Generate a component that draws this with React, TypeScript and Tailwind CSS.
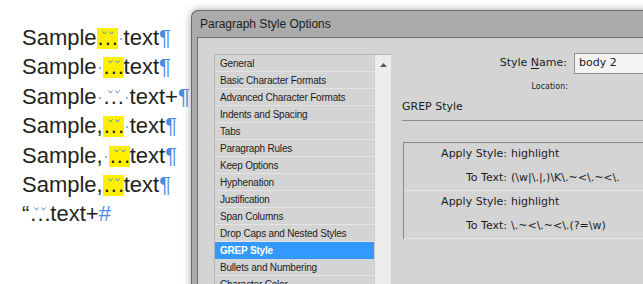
import React from "react";

const LIST_ITEMS = [
  "General",
  "Basic Character Formats",
  "Advanced Character Formats",
  "Indents and Spacing",
  "Tabs",
  "Paragraph Rules",
  "Keep Options",
  "Hyphenation",
  "Justification",
  "Span Columns",
  "Drop Caps and Nested Styles",
  "GREP Style",
  "Bullets and Numbering",
  "Character Color",
];

function Mark({ left }: { left: number }) {
  return (
    <svg className="absolute top-[3px]" style={{ left }} width="5" height="4" viewBox="0 0 5 4">
      <path d="M0.5 0.5 L2.5 3 L4.5 0.5" fill="none" stroke="#4a8be0" strokeWidth="1" />
    </svg>
  );
}

// three dots joined by thin spaces, optionally highlighted
function Dots({ hl }: { hl?: boolean }) {
  return (
    <span
      className={`relative inline-block h-[21px] w-[21px] pl-[1px] text-center leading-[19px] ${hl ? "bg-[#fff000]" : ""}`}
    >
      <span className="tracking-[1px]">...</span>
      <Mark left={5} />
      <Mark left={12} />
    </span>
  );
}

// hidden space marker
function Sp() {
  return (
    <span className="relative inline-block h-[10px] w-[6px]">
      <span className="absolute left-[2px] top-[3px] h-[2px] w-[2px] rounded-full bg-[#6b9de0]" />
    </span>
  );
}

function Pilcrow() {
  return <span className="text-[#4a8be0]">¶</span>;
}

const tahoma = { fontFamily: '"DejaVu Sans", Verdana, sans-serif' };

export default function App() {
  return (
    <div className="flex h-[284px] w-[643px] overflow-hidden bg-white">
      {/* sample text */}
      <div
        className="w-[191px] flex-none pl-[22px] pt-[23px] text-[22px] leading-[29.4px] text-[#231f20]"
        style={{ fontFamily: '"Liberation Sans", Arial, sans-serif' }}
      >
        <div className="whitespace-nowrap">Sample<Dots hl /><Sp />text<Pilcrow /></div>
        <div className="whitespace-nowrap">Sample<Sp /><Dots hl />text<Pilcrow /></div>
        <div className="whitespace-nowrap">Sample<Sp /><Dots /><Sp />text+<Pilcrow /></div>
        <div className="whitespace-nowrap">Sample,<Dots hl /><Sp />text<Pilcrow /></div>
        <div className="whitespace-nowrap">Sample,<Sp /><Dots hl />text<Pilcrow /></div>
        <div className="whitespace-nowrap">Sample,<Dots hl />text<Pilcrow /></div>
        <div className="whitespace-nowrap">“<Dots />text+<span className="text-[#4a8be0]">#</span></div>
      </div>

      {/* dialog */}
      <div
        className="mt-[10px] flex h-[300px] w-[520px] flex-none flex-col rounded-tl-[7px] border-l border-t border-[#6a6a6a] bg-[#ababab] text-[#1c1c1c] shadow-[0_0_8px_rgba(0,0,0,0.35)]"
        style={{ fontFamily: '"Liberation Sans", Arial, sans-serif' }}
      >
        <div className="flex h-[26px] items-center pl-[8px] text-[12px]">Paragraph Style Options</div>
        <div className="ml-[5px] flex flex-1 border-l border-t border-[#6e6e6e] bg-[#d4d4d4] pl-[16px] pt-[16px]">
          {/* category list */}
          <div className="flex h-[240px] w-[177px] flex-none border-t border-l border-[#b8b8b8]">
            <div className="w-[159px] flex-none">
              {LIST_ITEMS.map((item) => {
                const active = item === "GREP Style";
                return (
                  <div
                    key={item}
                    className={`flex h-[17px] items-center whitespace-nowrap border-b pl-[5px] text-[10px] tracking-[-0.2px] ${
                      active ? "border-[#3399ff] bg-[#3399ff] font-bold text-white" : "border-[#e4e4e4] text-[#1c1c1c]"
                    }`}
                  >
                    {item}
                  </div>
                );
              })}
            </div>
            <div className="flex w-[17px] flex-none justify-center border-l border-[#cfcfcf] bg-[#ececec] pt-[8px]">
              <svg width="7" height="4" viewBox="0 0 7 4">
                <path d="M3.5 0 L7 4 L0 4 Z" fill="#5a5a5a" />
              </svg>
            </div>
          </div>

          {/* right side */}
          <div className="ml-[11px] mt-[-1px] flex flex-1 flex-col text-[11px]" style={tahoma}>
            <div className="flex items-center">
              <div className="w-[165px] text-right">
                Style <span className="underline underline-offset-2">N</span>ame:
              </div>
              <div className="ml-[7px] flex h-[21px] w-[120px] items-center border border-[#8f8f8f] bg-[#f3f3f3] pl-[4px]">
                body 2
              </div>
            </div>
            <div className="mt-[7px] flex h-[12px] items-center">
              <div className="w-[166px] text-right text-[8px]">Location:</div>
            </div>
            <div className="mt-[6px] flex h-[16px] items-center">GREP Style</div>
            <div className="mt-[5px] h-px w-[260px] bg-[#8c8c8c]" />
            <div className="ml-[1px] mt-[21px] border-l border-t border-[#8a8a8a]">
              {[
                "(\\w|\\.|,)\\K\\.~<\\.~<\\.",
                "\\.~<\\.~<\\.(?=\\w)",
              ].map((expr) => (
                <div key={expr} className="flex flex-col gap-[5px] border-b border-[#e6e6e6] pb-[2px] pt-[2px]">
                  <div className="flex h-[19px] items-center">
                    <div className="w-[103px] text-right">Apply Style:</div>
                    <div className="ml-[4px]">highlight</div>
                  </div>
                  <div className="flex h-[19px] items-center">
                    <div className="w-[103px] text-right">To Text:</div>
                    <div className="ml-[4px] whitespace-nowrap">{expr}</div>
                  </div>
                </div>
              ))}
            </div>
          </div>
        </div>
      </div>
    </div>
  );
}
